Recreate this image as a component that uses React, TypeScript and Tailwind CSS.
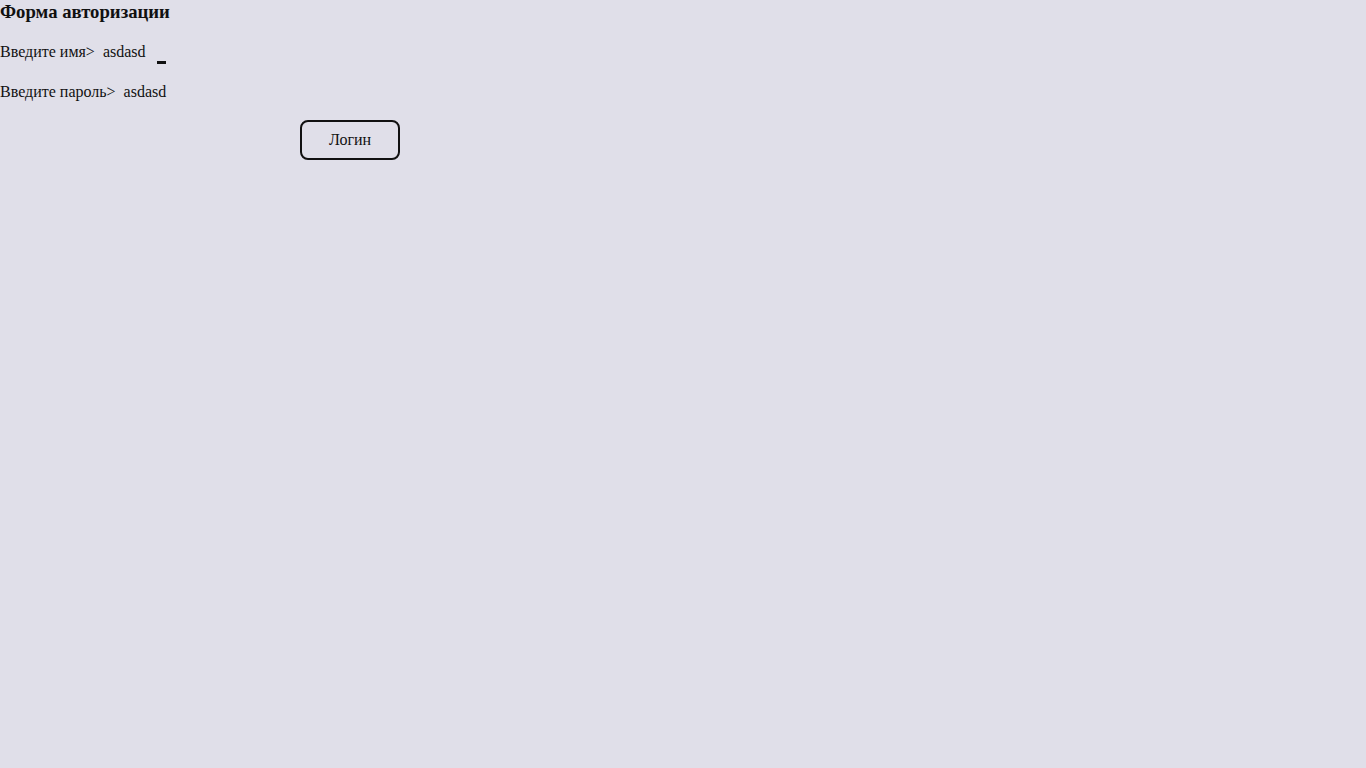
export default function App() {
  return (
    <div className="min-h-screen bg-[#e0dfe9] text-[#111] font-['Liberation_Serif',serif]">
      <div className="flex flex-col items-start gap-4">
        <h3 className="text-[18.72px] font-bold leading-6">Форма авторизации</h3>
        <div className="flex h-6 items-start whitespace-pre text-base leading-6">
          <span>Введите имя&gt;  asdasd</span>
          <span className="ml-[11px] mt-[21px] h-[3px] w-[9px] bg-[#111]" />
        </div>
        <div className="h-6 whitespace-pre text-base leading-6">Введите пароль&gt;  asdasd</div>
        <button className="ml-[300px] h-10 w-[100px] rounded-lg border-2 border-[#111] text-base">
          Логин
        </button>
      </div>
    </div>
  );
}
